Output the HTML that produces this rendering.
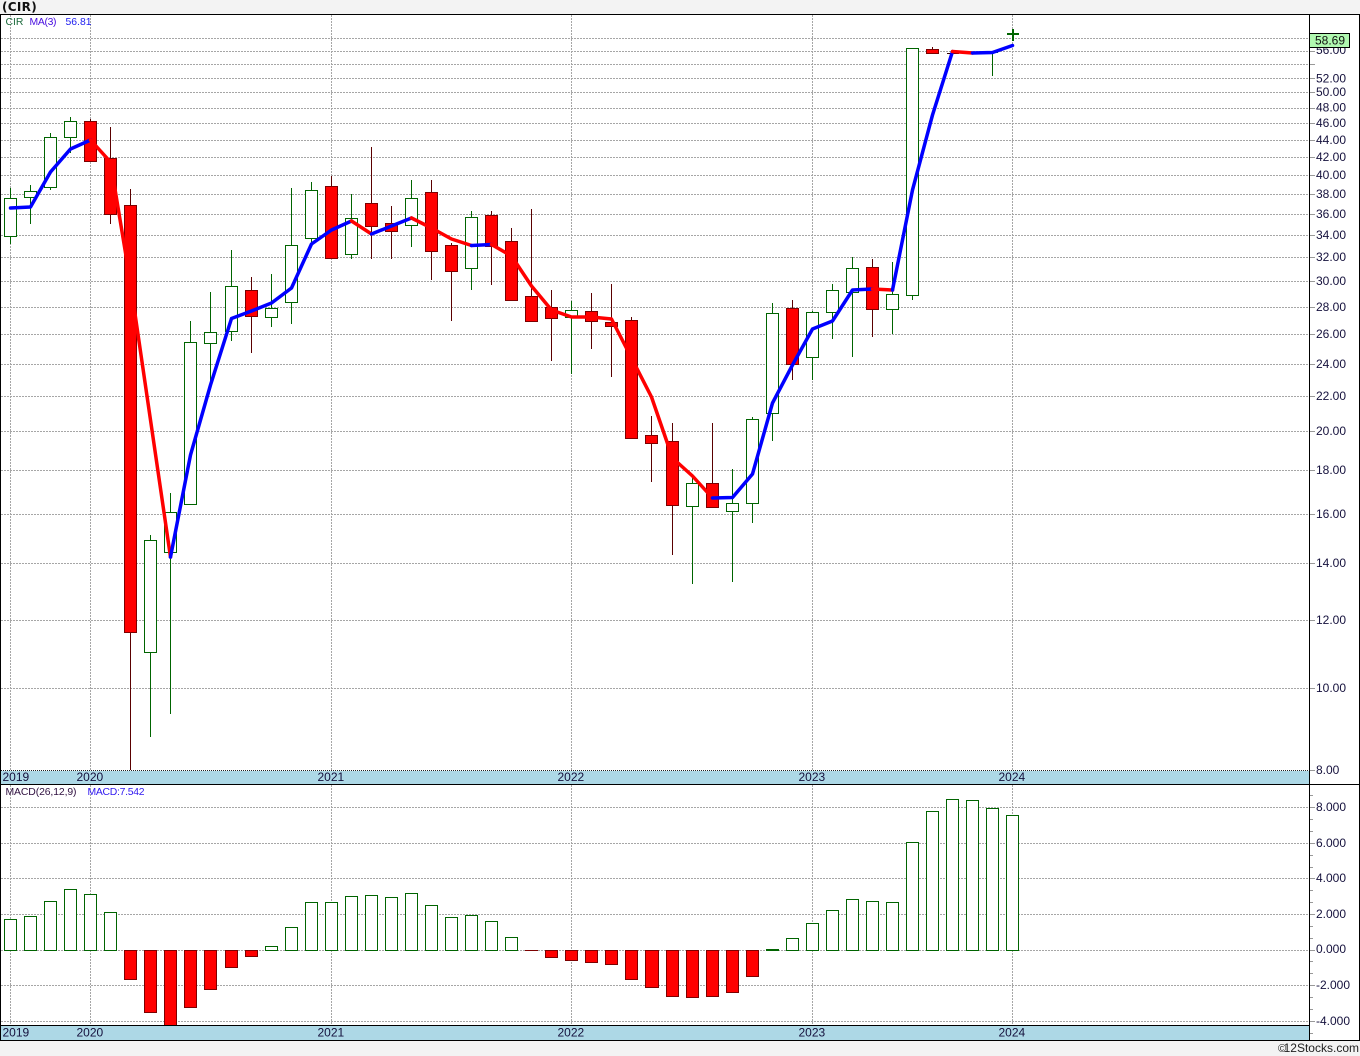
<!DOCTYPE html>
<html lang="en">
<head>
<meta charset="utf-8">
<title>CIR chart</title>
<style>
html,body{margin:0;padding:0;background:#f3f3f3;}
body{width:1360px;height:1056px;overflow:hidden;}
svg{display:block;}
text{font-family:"Liberation Sans",sans-serif;}
.a text{font-size:12px;fill:#14103c;}
.l{font-size:10.4px;}
.c rect,.w,.k{shape-rendering:crispEdges;}
.g{fill:#fff;stroke:#006400;stroke-width:1;}
.r{fill:#f00;stroke:#7c0000;stroke-width:1;}
.m{fill:none;stroke-width:3.5;stroke-linejoin:round;stroke-linecap:round;}
</style>
</head>
<body>
<svg width="1360" height="1056" viewBox="0 0 1360 1056" xmlns="http://www.w3.org/2000/svg">
<rect x="0" y="0" width="1360" height="1056" fill="#f3f3f3"/>
<rect x="0" y="14" width="1360" height="1027" fill="#fff"/>
<text x="2" y="11" style="font-family:'DejaVu Sans',sans-serif;font-size:12px;font-weight:bold;letter-spacing:.3px" fill="#111">(CIR)</text>

<!-- grid -->
<path class="k" fill="none" stroke="#a6a6a6" stroke-dasharray="2 1" d="M1 38.5H1309M1 51.5H1309M1 64.5H1309M1 78.5H1309M1 92.5H1309M1 108.5H1309M1 123.5H1309M1 140.5H1309M1 157.5H1309M1 175.5H1309M1 194.5H1309M1 214.5H1309M1 235.5H1309M1 257.5H1309M1 281.5H1309M1 307.5H1309M1 334.5H1309M1 364.5H1309M1 396.5H1309M1 431.5H1309M1 470.5H1309M1 514.5H1309M1 563.5H1309M1 620.5H1309M1 688.5H1309
M1 807.5H1309M1 843.5H1309M1 878.5H1309M1 914.5H1309M1 950.5H1309M1 985.5H1309M1 1021.5H1309
M10.5 15V770M90.5 15V770M331.5 15V770M571.5 15V770M812.5 15V770M1012.5 15V770
M10.5 785V1025M90.5 785V1025M331.5 785V1025M571.5 785V1025M812.5 785V1025M1012.5 785V1025"/>

<!-- wicks -->
<path class="w" fill="none" stroke="#006400" d="M10.5 188V244M30.5 185V224M50.5 133V190M70.5 117V153M150.5 535V737M170.5 493V714M190.5 321V505M210.5 292V385M231.5 250V341M271.5 274V327M291.5 188V324M311.5 182V244M351.5 194V259M411.5 180V247M471.5 211V290M571.5 301V374M692.5 478V584M732.5 469V582M752.5 417V523M772.5 303V441M812.5 311V380M832.5 284V339M852.5 257V357M892.5 262V334M912.5 48V300M992.5 52V76"/>
<path class="w" fill="none" stroke="#5a0000" d="M90.5 119V161M110.5 127V224M130.5 189V770M251.5 277V353M331.5 176V259M371.5 147V259M391.5 206V259M431.5 180V280M451.5 243V321M491.5 211V285M511.5 228V301M531.5 209V322M551.5 290V361M591.5 293V349M611.5 284V377M631.5 317V438M651.5 416V482M672.5 423V555M712.5 423V507M792.5 300V380M872.5 259V337M932.5 47V53"/>

<!-- candle bodies -->
<g class="c">
<rect class="g" x="4.5" y="198.5" width="12" height="38"/>
<rect class="g" x="24.5" y="191.5" width="12" height="6"/>
<rect class="g" x="44.5" y="137.5" width="12" height="50"/>
<rect class="g" x="64.5" y="121.5" width="12" height="16"/>
<rect class="r" x="84.5" y="121.5" width="12" height="40"/>
<rect class="r" x="104.5" y="158.5" width="12" height="56"/>
<rect class="r" x="124.5" y="205.5" width="12" height="427"/>
<rect class="g" x="144.5" y="540.5" width="12" height="112"/>
<rect class="g" x="164.5" y="512.5" width="12" height="40"/>
<rect class="g" x="184.5" y="342.5" width="12" height="162"/>
<rect class="g" x="204.5" y="332.5" width="12" height="11"/>
<rect class="g" x="225.5" y="286.5" width="12" height="45"/>
<rect class="r" x="245.5" y="290.5" width="12" height="26"/>
<rect class="g" x="265.5" y="308.5" width="12" height="9"/>
<rect class="g" x="285.5" y="245.5" width="12" height="57"/>
<rect class="g" x="305.5" y="190.5" width="12" height="48"/>
<rect class="r" x="325.5" y="186.5" width="12" height="72"/>
<rect class="g" x="345.5" y="218.5" width="12" height="36"/>
<rect class="r" x="365.5" y="203.5" width="12" height="23"/>
<rect class="r" x="385.5" y="223.5" width="12" height="8"/>
<rect class="g" x="405.5" y="198.5" width="12" height="27"/>
<rect class="r" x="425.5" y="192.5" width="12" height="59"/>
<rect class="r" x="445.5" y="245.5" width="12" height="26"/>
<rect class="g" x="465.5" y="217.5" width="12" height="51"/>
<rect class="r" x="485.5" y="215.5" width="12" height="31"/>
<rect class="r" x="505.5" y="241.5" width="12" height="59"/>
<rect class="r" x="525.5" y="296.5" width="12" height="25"/>
<rect class="r" x="545.5" y="307.5" width="12" height="11"/>
<rect class="g" x="565.5" y="310.5" width="12" height="7"/>
<rect class="r" x="585.5" y="311.5" width="12" height="10"/>
<rect class="r" x="605.5" y="322.5" width="12" height="4"/>
<rect class="r" x="625.5" y="320.5" width="12" height="118"/>
<rect class="r" x="645.5" y="435.5" width="12" height="8"/>
<rect class="r" x="666.5" y="441.5" width="12" height="64"/>
<rect class="g" x="686.5" y="483.5" width="12" height="23"/>
<rect class="r" x="706.5" y="483.5" width="12" height="24"/>
<rect class="g" x="726.5" y="503.5" width="12" height="8"/>
<rect class="g" x="746.5" y="419.5" width="12" height="84"/>
<rect class="g" x="766.5" y="313.5" width="12" height="100"/>
<rect class="r" x="786.5" y="308.5" width="12" height="56"/>
<rect class="g" x="806.5" y="312.5" width="12" height="45"/>
<rect class="g" x="826.5" y="290.5" width="12" height="22"/>
<rect class="g" x="846.5" y="268.5" width="12" height="24"/>
<rect class="r" x="866.5" y="267.5" width="12" height="42"/>
<rect class="g" x="886.5" y="294.5" width="12" height="15"/>
<rect class="g" x="906.5" y="48.5" width="12" height="247"/>
<rect class="r" x="926.5" y="49.5" width="12" height="4"/>
<rect x="947" y="53" width="12" height="1" fill="#300"/>
<rect x="986" y="52" width="12" height="1" fill="#006400"/>
<rect x="1007" y="33" width="12" height="2" fill="#006400"/>
<rect x="1012" y="29" width="2" height="12" fill="#006400"/>
</g>

<!-- moving average -->
<g class="m">
<polyline stroke="#00f" points="10.5,208 30.5,207 50.5,172 70.5,149 90.5,140"/>
<polyline stroke="#f00" points="90.5,140 110.5,162 130.5,283 150.5,420 170.5,557"/>
<polyline stroke="#00f" points="170.5,557 190.5,455 210.5,385 231.5,318.5 251.5,311 271.5,303 291.5,288 311.5,244 331.5,230 351.5,221"/>
<polyline stroke="#f00" points="351.5,221 371.5,234"/>
<polyline stroke="#00f" points="371.5,234 391.5,226 411.5,218"/>
<polyline stroke="#f00" points="411.5,218 431.5,228 451.5,239 471.5,245.5"/>
<polyline stroke="#00f" points="471.5,245.5 491.5,244.5"/>
<polyline stroke="#f00" points="491.5,244.5 511.5,256 531.5,286 551.5,310 571.5,317 591.5,317 611.5,319 631.5,358 651.5,397 672.5,458 692.5,476 712.5,498"/>
<polyline stroke="#00f" points="712.5,498 732.5,497.5 752.5,474 772.5,403 792.5,365 812.5,329 832.5,321 852.5,290 872.5,289"/>
<polyline stroke="#f00" points="872.5,289 892.5,290"/>
<polyline stroke="#00f" points="892.5,290 912.5,190 932.5,115 952.5,51.5"/>
<polyline stroke="#f00" points="952.5,51.5 972.5,53"/>
<polyline stroke="#00f" points="972.5,53 992.5,52.5 1012.5,45.5"/>
</g>

<!-- MACD bars -->
<g class="c">
<rect class="g" x="4.5" y="919.5" width="12" height="31"/>
<rect class="g" x="24.5" y="916.5" width="12" height="34"/>
<rect class="g" x="44.5" y="901.5" width="12" height="49"/>
<rect class="g" x="64.5" y="889.5" width="12" height="61"/>
<rect class="g" x="84.5" y="894.5" width="12" height="56"/>
<rect class="g" x="104.5" y="912.5" width="12" height="38"/>
<rect class="r" x="124.5" y="950.5" width="12" height="29"/>
<rect class="r" x="144.5" y="950.5" width="12" height="62"/>
<rect class="r" x="164.5" y="950.5" width="12" height="75"/>
<rect class="r" x="184.5" y="950.5" width="12" height="57"/>
<rect class="r" x="204.5" y="950.5" width="12" height="39"/>
<rect class="r" x="225.5" y="950.5" width="12" height="17"/>
<rect class="r" x="245.5" y="950.5" width="12" height="6"/>
<rect class="g" x="265.5" y="946.5" width="12" height="4"/>
<rect class="g" x="285.5" y="927.5" width="12" height="23"/>
<rect class="g" x="305.5" y="902.5" width="12" height="48"/>
<rect class="g" x="325.5" y="902.5" width="12" height="48"/>
<rect class="g" x="345.5" y="896.5" width="12" height="54"/>
<rect class="g" x="365.5" y="895.5" width="12" height="55"/>
<rect class="g" x="385.5" y="897.5" width="12" height="53"/>
<rect class="g" x="405.5" y="893.5" width="12" height="57"/>
<rect class="g" x="425.5" y="905.5" width="12" height="45"/>
<rect class="g" x="445.5" y="917.5" width="12" height="33"/>
<rect class="g" x="465.5" y="915.5" width="12" height="35"/>
<rect class="g" x="485.5" y="921.5" width="12" height="29"/>
<rect class="g" x="505.5" y="937.5" width="12" height="13"/>
<rect x="525" y="950" width="13" height="1" fill="#7c0000"/>
<rect class="r" x="545.5" y="950.5" width="12" height="7"/>
<rect class="r" x="565.5" y="950.5" width="12" height="10"/>
<rect class="r" x="585.5" y="950.5" width="12" height="12"/>
<rect class="r" x="605.5" y="950.5" width="12" height="14"/>
<rect class="r" x="625.5" y="950.5" width="12" height="29"/>
<rect class="r" x="645.5" y="950.5" width="13" height="37"/>
<rect class="r" x="666.5" y="950.5" width="12" height="46"/>
<rect class="r" x="686.5" y="950.5" width="12" height="47"/>
<rect class="r" x="706.5" y="950.5" width="12" height="46"/>
<rect class="r" x="726.5" y="950.5" width="12" height="42"/>
<rect class="r" x="746.5" y="950.5" width="12" height="26"/>
<rect x="766" y="949" width="13" height="2" fill="#006400"/>
<rect class="g" x="786.5" y="938.5" width="12" height="12"/>
<rect class="g" x="806.5" y="923.5" width="12" height="27"/>
<rect class="g" x="826.5" y="910.5" width="12" height="40"/>
<rect class="g" x="846.5" y="899.5" width="12" height="51"/>
<rect class="g" x="866.5" y="901.5" width="12" height="49"/>
<rect class="g" x="886.5" y="902.5" width="12" height="48"/>
<rect class="g" x="906.5" y="842.5" width="12" height="108"/>
<rect class="g" x="926.5" y="811.5" width="12" height="139"/>
<rect class="g" x="946.5" y="799.5" width="12" height="151"/>
<rect class="g" x="966.5" y="800.5" width="12" height="150"/>
<rect class="g" x="986.5" y="808.5" width="12" height="142"/>
<rect class="g" x="1006.5" y="815.5" width="12" height="135"/>
</g>

<!-- date bands -->
<rect x="1" y="771" width="1308" height="13" fill="#add8e6"/>
<path class="k" stroke="#222" stroke-dasharray="1 1" fill="none" d="M1 770.5H1309"/>
<rect x="1" y="1026" width="1308" height="14" fill="#add8e6"/>

<!-- frame -->
<g class="k" fill="#000">
<rect x="0" y="14" width="1360" height="1"/>
<rect x="0" y="14" width="1" height="1027"/>
<rect x="1309" y="14" width="1" height="1027"/>
<rect x="1359" y="14" width="1" height="1027"/>
<rect x="0" y="1040" width="1360" height="1"/>
<rect x="0" y="784" width="1360" height="1"/>
<rect x="0" y="1025" width="1309" height="1"/>
</g>

<!-- axis ticks -->
<path class="k" fill="none" stroke="#999" d="M1310 38.5h5M1310 51.5h5M1310 64.5h5M1310 78.5h5M1310 92.5h5M1310 108.5h5M1310 123.5h5M1310 140.5h5M1310 157.5h5M1310 175.5h5M1310 194.5h5M1310 214.5h5M1310 235.5h5M1310 257.5h5M1310 281.5h5M1310 307.5h5M1310 334.5h5M1310 364.5h5M1310 396.5h5M1310 431.5h5M1310 470.5h5M1310 514.5h5M1310 563.5h5M1310 620.5h5M1310 688.5h5M1310 770.5h5
M1310 807.5h5M1310 843.5h5M1310 878.5h5M1310 914.5h5M1310 950.5h5M1310 985.5h5M1310 1021.5h5
M1310 795.5h3M1310 819.5h3M1310 831.5h3M1310 855.5h3M1310 867.5h3M1310 890.5h3M1310 902.5h3M1310 926.5h3M1310 938.5h3M1310 961.5h3M1310 973.5h3M1310 997.5h3M1310 1009.5h3M1310 1033.5h3"/>

<!-- axis labels -->
<g class="a">
<text x="1316" y="54">56.00</text>
<text x="1316" y="82.5">52.00</text>
<text x="1316" y="96">50.00</text>
<text x="1316" y="111.5">48.00</text>
<text x="1316" y="127">46.00</text>
<text x="1316" y="144">44.00</text>
<text x="1316" y="161">42.00</text>
<text x="1316" y="179">40.00</text>
<text x="1316" y="198">38.00</text>
<text x="1316" y="218">36.00</text>
<text x="1316" y="239">34.00</text>
<text x="1316" y="261">32.00</text>
<text x="1316" y="285">30.00</text>
<text x="1316" y="311">28.00</text>
<text x="1316" y="338">26.00</text>
<text x="1316" y="368">24.00</text>
<text x="1316" y="400">22.00</text>
<text x="1316" y="435">20.00</text>
<text x="1316" y="474">18.00</text>
<text x="1316" y="518">16.00</text>
<text x="1316" y="567">14.00</text>
<text x="1316" y="624">12.00</text>
<text x="1316" y="692">10.00</text>
<text x="1316" y="774">8.00</text>
<text x="1316" y="811">8.000</text>
<text x="1316" y="847">6.000</text>
<text x="1316" y="882">4.000</text>
<text x="1316" y="918">2.000</text>
<text x="1316" y="953">0.000</text>
<text x="1316" y="989">-2.000</text>
<text x="1316" y="1025">-4.000</text>
</g>
<rect class="k" x="1309.5" y="33.5" width="40" height="14" fill="#b0f8b0" stroke="#000"/>
<text x="1315" y="44.5" font-size="12" fill="#111">58.69</text>

<!-- year labels -->
<g class="a">
<text x="2.5" y="781">2019</text>
<text x="76.5" y="781">2020</text>
<text x="317.5" y="781">2021</text>
<text x="557.5" y="781">2022</text>
<text x="798.5" y="781">2023</text>
<text x="998.5" y="781">2024</text>
<text x="2.5" y="1036.5">2019</text>
<text x="76.5" y="1036.5">2020</text>
<text x="317.5" y="1036.5">2021</text>
<text x="557.5" y="1036.5">2022</text>
<text x="798.5" y="1036.5">2023</text>
<text x="998.5" y="1036.5">2024</text>
</g>

<!-- legends -->
<text class="l" x="5.5" y="25" fill="#1c6a3c">CIR</text>
<text class="l" x="29.5" y="25" fill="#4a10e0" textLength="27">MA(3)</text>
<text class="l" x="65.5" y="25" fill="#1c1cf0" textLength="26">56.81</text>
<text class="l" x="5.5" y="795" fill="#301040" textLength="71">MACD(26,12,9)</text>
<text class="l" x="87.5" y="795" fill="#3018f0" textLength="57">MACD:7.542</text>

<text x="1278" y="1052" font-size="11" fill="#222">©</text>
<text x="1359" y="1052" text-anchor="end" font-size="12" fill="#222">12Stocks.com</text>
</svg>
</body>
</html>
